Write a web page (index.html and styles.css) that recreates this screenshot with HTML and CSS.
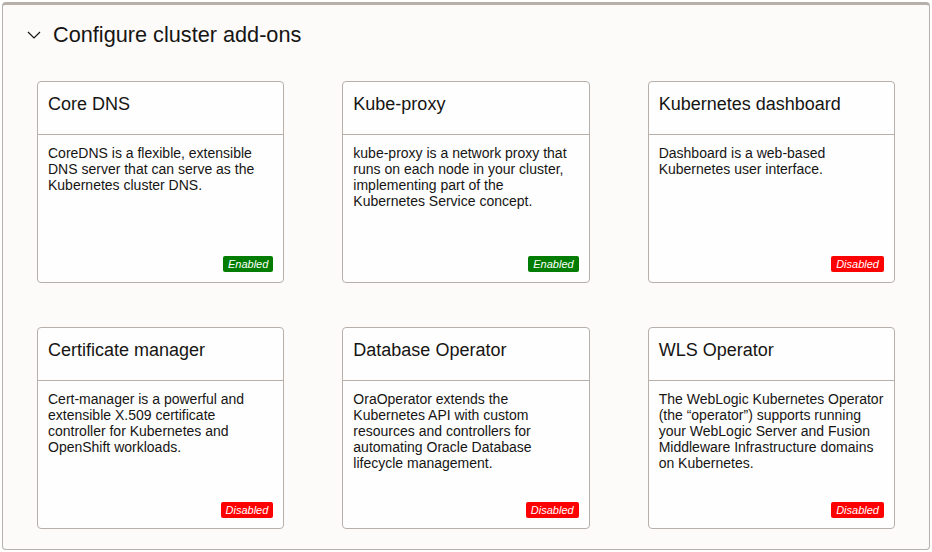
FILE: index.html
```html
<!DOCTYPE html>
<html lang="en">
<head>
<meta charset="utf-8">
<title>Configure cluster add-ons</title>
<link rel="stylesheet" href="styles.css">
</head>
<body>
<section class="panel">
  <div class="panel-head">
    <svg class="chevron" width="14" height="8" viewBox="0 0 14 8" aria-hidden="true"><polyline points="1,1 7,7 13,1" fill="none" stroke="#161513" stroke-width="1.2"/></svg>
    <h2 class="panel-title">Configure cluster add-ons</h2>
  </div>
  <div class="grid">
    <div class="card">
      <div class="card-head">Core DNS</div>
      <div class="card-body">
        <p class="desc">CoreDNS is a flexible, extensible DNS server that can serve as the Kubernetes cluster DNS.</p>
        <span class="badge on">Enabled</span>
      </div>
    </div>
    <div class="card">
      <div class="card-head">Kube-proxy</div>
      <div class="card-body">
        <p class="desc">kube-proxy is a network proxy that runs on each node in your cluster, implementing part of the Kubernetes Service concept.</p>
        <span class="badge on">Enabled</span>
      </div>
    </div>
    <div class="card">
      <div class="card-head">Kubernetes dashboard</div>
      <div class="card-body">
        <p class="desc">Dashboard is a web-based Kubernetes user interface.</p>
        <span class="badge off">Disabled</span>
      </div>
    </div>
    <div class="card">
      <div class="card-head">Certificate manager</div>
      <div class="card-body">
        <p class="desc">Cert-manager is a powerful and extensible X.509 certificate controller for Kubernetes and OpenShift workloads.</p>
        <span class="badge off">Disabled</span>
      </div>
    </div>
    <div class="card">
      <div class="card-head">Database Operator</div>
      <div class="card-body">
        <p class="desc">OraOperator extends the Kubernetes API with custom resources and controllers for automating Oracle Database lifecycle management.</p>
        <span class="badge off">Disabled</span>
      </div>
    </div>
    <div class="card">
      <div class="card-head">WLS Operator</div>
      <div class="card-body">
        <p class="desc">The WebLogic Kubernetes Operator (the “operator”) supports running your WebLogic Server and Fusion Middleware Infrastructure domains on Kubernetes.</p>
        <span class="badge off">Disabled</span>
      </div>
    </div>
  </div>
</section>
</body>
</html>
```
FILE: styles.css
```css
* { box-sizing: border-box; }
html, body { margin: 0; padding: 0; background: #ffffff; }
body {
  font-family: "Liberation Sans", Arial, sans-serif;
  color: #161513;
  width: 932px;
  height: 552px;
  padding: 2px;
}
.panel {
  height: 548px;
  background: #fcfbfa;
  border: 1px solid #b7b0aa;
  border-top: 3px solid #b7b0aa;
  border-radius: 4px;
  padding: 15px 34px 0 34px;
}
.panel-head {
  display: flex;
  align-items: center;
  height: 30px;
  margin-left: -10px;
}
.chevron { display: block; margin-right: 12px; }
.panel-title {
  margin: 0;
  font-size: 21.7px;
  font-weight: normal;
  line-height: 30px;
}
.grid {
  margin-top: 31px;
  display: grid;
  grid-template-columns: repeat(3, 1fr);
  column-gap: 58px;
  row-gap: 44px;
}
.card {
  height: 202px;
  background: #fefefe;
  border: 1px solid #b7b0aa;
  border-radius: 4px;
  display: flex;
  flex-direction: column;
}
.card-head {
  height: 53px;
  padding: 11px 10px 0;
  font-size: 18px;
  line-height: 22px;
  border-bottom: 1px solid #b7b0aa;
}
.card-body {
  flex: 1;
  display: flex;
  flex-direction: column;
  padding: 10px 10px 10px;
}
.desc {
  margin: 0;
  font-size: 14px;
  line-height: 16px;
}
.badge {
  margin-top: auto;
  align-self: flex-end;
  font-size: 11px;
  font-style: italic;
  line-height: 16px;
  height: 16px;
  padding: 0 5px;
  border-radius: 2px;
  color: #ffffff;
}
.badge.on { background: #007d00; }
.badge.off { background: #ff0000; }
```
